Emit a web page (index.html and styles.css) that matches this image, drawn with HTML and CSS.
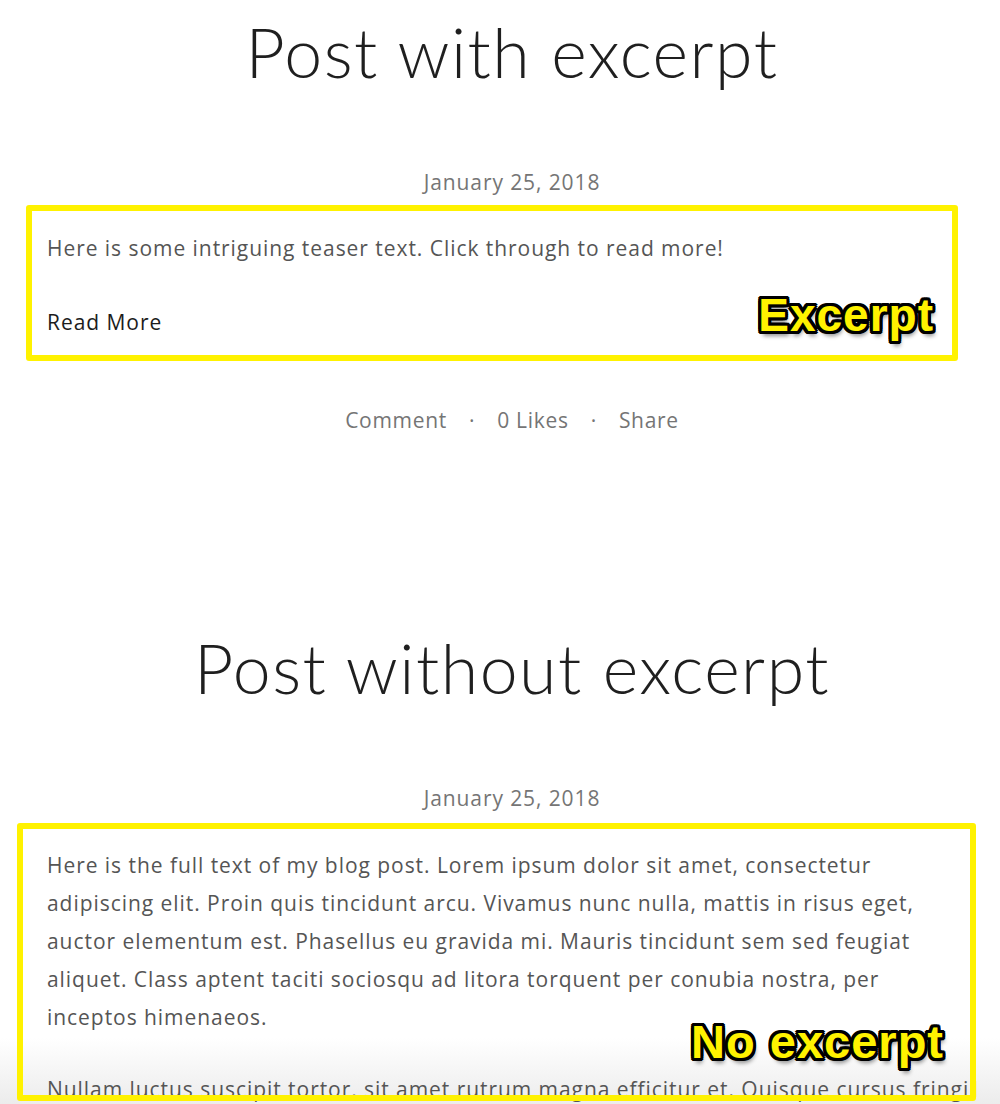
FILE: index.html
```html
<!DOCTYPE html>
<html lang="en">
<head>
<meta charset="utf-8">
<title>Blog posts</title>
<link rel="stylesheet" href="styles.css">
</head>
<body>
<main class="page">
  <article class="post">
    <h1 class="post-title">Post with excerpt</h1>
    <div class="post-date">January 25, 2018</div>
    <div class="annotated annotated-excerpt">
      <p class="post-text">Here is some intriguing teaser text. Click through to read more!</p>
      <a class="read-more" href="#">Read More</a>
      <div class="frame frame-excerpt"></div>
      <div class="label label-excerpt">Excerpt</div>
    </div>
    <div class="post-meta">
      <span>Comment</span><span class="dot">·</span><span>0 Likes</span><span class="dot">·</span><span>Share</span>
    </div>
  </article>

  <article class="post post-second">
    <h1 class="post-title">Post without excerpt</h1>
    <div class="post-date">January 25, 2018</div>
    <div class="annotated annotated-full">
      <p class="post-text para-wrap">Here is the full text of my blog post. Lorem ipsum dolor sit amet, consectetur adipiscing elit. Proin quis tincidunt arcu. Vivamus nunc nulla, mattis in risus eget, auctor elementum est. Phasellus eu gravida mi. Mauris tincidunt sem sed feugiat aliquet. Class aptent taciti sociosqu ad litora torquent per conubia nostra, per inceptos himenaeos.</p>
      <p class="post-text nowrap">Nullam luctus suscipit tortor, sit amet rutrum magna efficitur et. Quisque cursus fringilla</p>
      <div class="frame frame-full"></div>
      <div class="label label-full">No excerpt</div>
    </div>
  </article>
</main>
</body>
</html>
```

FILE: styles.css
```css
html, body {
  margin: 0;
  padding: 0;
}

body {
  font-family: "Open Sans", Lato, "Liberation Sans", sans-serif;
  overflow: hidden;
  height: 1104px;
  background: linear-gradient(to bottom, #ffffff 0, #ffffff 1038px, #ececec 1104px);
}

.page {
  width: 930px;
  margin-left: 47px;
}

.post {
  display: flex;
  flex-direction: column;
}

.post-title {
  margin: 0;
  padding-top: 11px;
  font-family: Lato, "Open Sans", sans-serif;
  font-size: 68px;
  line-height: 82px;
  font-weight: 300;
  color: #1f1f1f;
  text-align: center;
  letter-spacing: 1.5px;
}

.post-date {
  margin-top: 74px;
  font-size: 21px;
  line-height: 30px;
  color: #757575;
  text-align: center;
  letter-spacing: 0.9px;
}

.annotated {
  position: relative;
  display: flex;
  flex-direction: column;
}

.annotated-excerpt {
  margin-top: 32px;
}

.post-text {
  margin: 0;
  font-size: 21px;
  line-height: 38px;
  color: #555555;
  letter-spacing: 0.95px;
}

.para-wrap {
  max-width: 915px;
}

.post-text + .post-text {
  margin-top: 34px;
}

.nowrap {
  white-space: nowrap;
  overflow: hidden;
}

.read-more {
  margin-top: 36px;
  font-size: 21px;
  line-height: 38px;
  color: #1c1c1c;
  text-decoration: none;
  letter-spacing: 0.95px;
  align-self: flex-start;
}

.post-meta {
  margin-top: 64px;
  display: flex;
  justify-content: center;
  font-size: 21px;
  line-height: 30px;
  color: #757575;
  letter-spacing: 0.7px;
}

.post-meta .dot {
  margin: 0 22px;
}

.post-second {
  margin-top: 181px;
}

.annotated-full {
  margin-top: 33px;
}

.frame {
  position: absolute;
  border: 6px solid #fff200;
  border-radius: 3px;
  pointer-events: none;
}

.frame-excerpt {
  top: -24px;
  left: -21px;
  right: 19px;
  bottom: -20px;
}

.frame-full {
  top: -23px;
  left: -30px;
  right: 1px;
  height: 266px;
}

.label {
  position: absolute;
  font-family: "Liberation Sans", Arial, sans-serif;
  font-weight: 700;
  color: #fff200;
  letter-spacing: 1px;
  line-height: 1;
  text-shadow:
    3px 0 0 #000, -3px 0 0 #000, 0 3px 0 #000, 0 -3px 0 #000,
    2px 2px 0 #000, -2px 2px 0 #000, 2px -2px 0 #000, -2px -2px 0 #000,
    3px 2px 0 #000, -3px 2px 0 #000, 3px -2px 0 #000, -3px -2px 0 #000,
    2px 3px 0 #000, -2px 3px 0 #000, 2px -3px 0 #000, -2px -3px 0 #000,
    2px 5px 4px rgba(0, 0, 0, 0.45);
}

.label-excerpt {
  right: 43px;
  bottom: 3px;
  font-size: 46px;
}

.label-full {
  right: 33px;
  top: 172px;
  font-size: 47px;
}
```
